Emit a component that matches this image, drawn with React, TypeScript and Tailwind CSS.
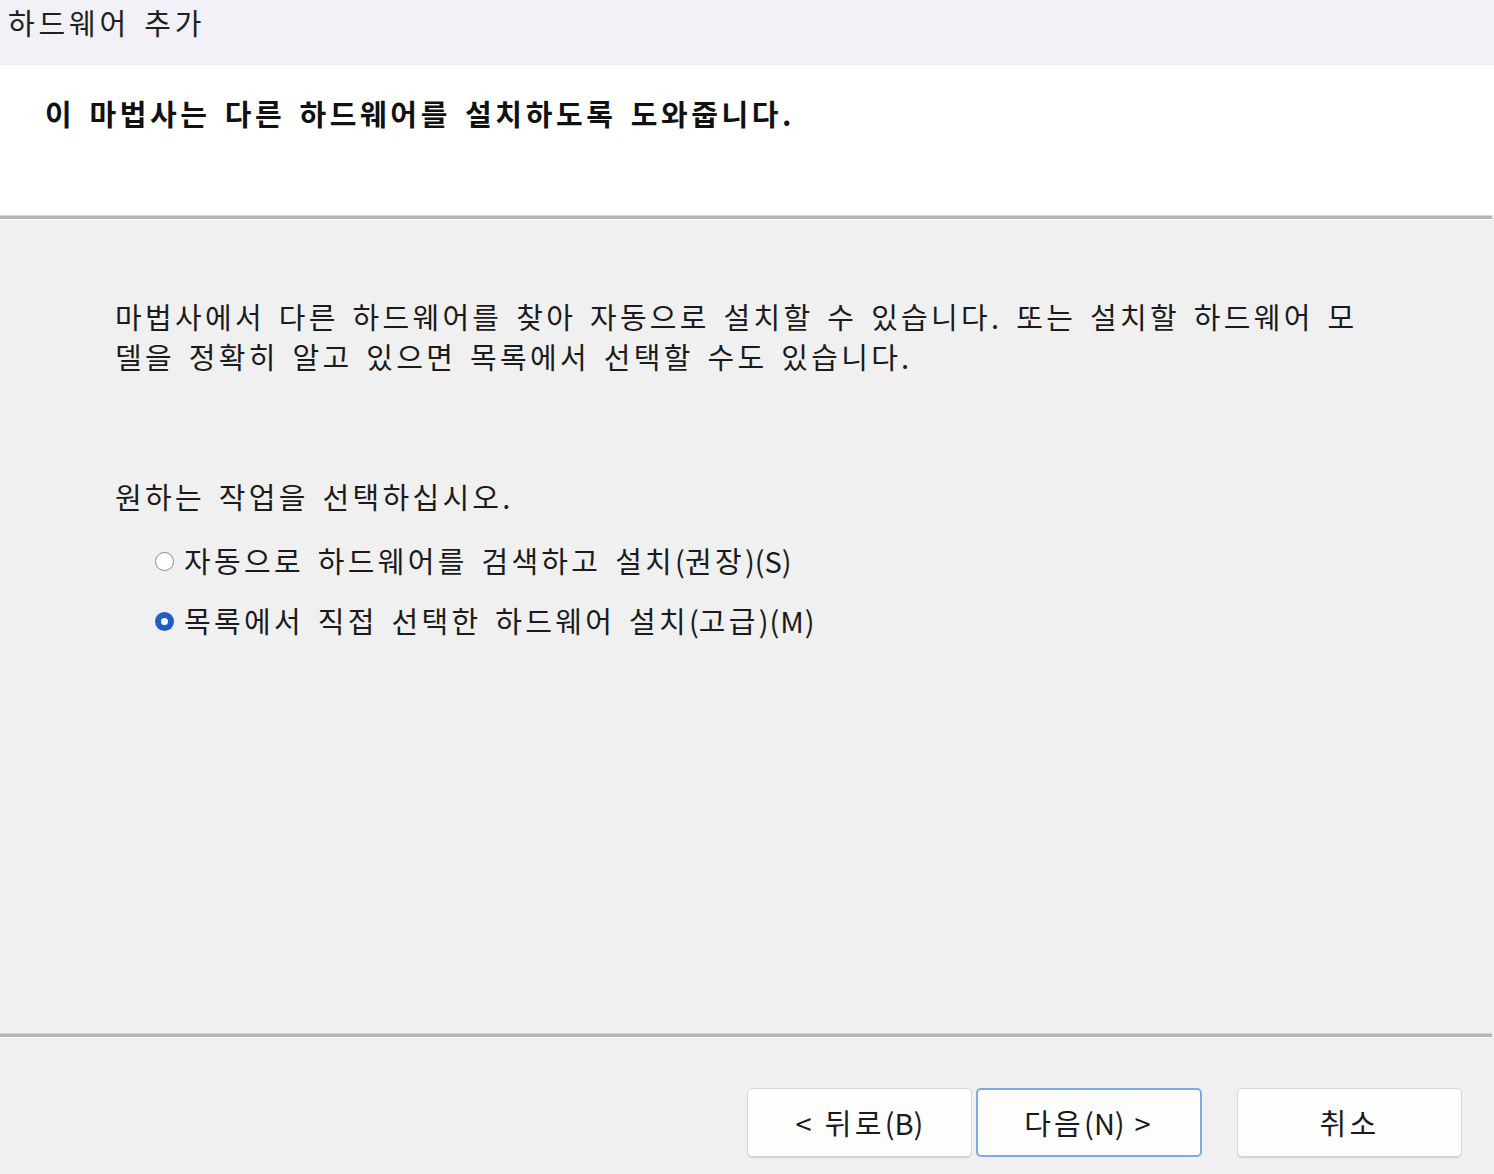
import { ReactNode } from 'react';

const font = "font-['Noto_Sans_CJK_KR','Noto_Sans',sans-serif]";

function Separator() {
    return (
        <div className="mr-[2px] flex flex-col">
            <div className="h-[1px] bg-[#d6d6d6]" />
            <div className="h-[3px] bg-[#b5b5b5]" />
            <div className="h-[1px] bg-[#ffffff]" />
        </div>
    );
}

function Radio({ checked, children }: { checked?: boolean; children: ReactNode }) {
    return (
        <div className="flex h-[40px] items-center pl-[155px]">
            {checked ? (
                <span className="flex h-[19px] w-[19px] items-center justify-center rounded-full bg-[#1f5fc4]">
                    <span className="h-[7px] w-[7px] rounded-full bg-white" />
                </span>
            ) : (
                <span className="h-[19px] w-[19px] rounded-full border-[1.5px] border-[#8a8a8a] bg-white" />
            )}
            <span className="ml-[10px] whitespace-nowrap">{children}</span>
        </div>
    );
}

function Button({ primary, children }: { primary?: boolean; children: ReactNode }) {
    return (
        <button
            className={
                primary
                    ? 'flex h-[69px] w-[226px] items-center justify-center rounded-[5px] border-2 border-[#7fa9df] bg-[#fdfdfd] text-[#1b1b1b]'
                    : 'flex h-[69px] w-[225px] items-center justify-center rounded-[5px] border border-[#d9d9d9] bg-[#fdfdfd] text-[#1b1b1b] shadow-[0_1px_0_#cfcfcf]'
            }
        >
            <span className="whitespace-nowrap">{children}</span>
        </button>
    );
}

export default function App() {
    return (
        <div
            className={`${font} flex h-[1174px] w-[1494px] flex-col overflow-hidden bg-[#f0f0f0] text-[29px] tracking-[3.3px] text-[#1b1b1b] [word-spacing:4px]`}
        >
            {/* title bar */}
            <div className="h-[65px] shrink-0 bg-[#f2f1f7] pl-[8px]">
                <div className="leading-[44px] tracking-[3.8px] text-[#202020]">하드웨어 추가</div>
            </div>

            {/* header */}
            <div className="h-[150px] shrink-0 bg-white pl-[45px] pt-[28px]">
                <div className="font-bold leading-[40px] tracking-[3.6px] text-[#111]">이 마법사는 다른 하드웨어를 설치하도록 도와줍니다.</div>
            </div>
            <Separator />

            {/* body */}
            <div className="flex flex-1 flex-col pt-[76px]">
                <div className="pl-[115px] leading-[40px]">
                    <div className="whitespace-nowrap">마법사에서 다른 하드웨어를 찾아 자동으로 설치할 수 있습니다. 또는 설치할 하드웨어 모</div>
                    <div className="whitespace-nowrap">델을 정확히 알고 있으면 목록에서 선택할 수도 있습니다.</div>
                </div>
                <div className="mt-[100px] pl-[115px] leading-[40px]">원하는 작업을 선택하십시오.</div>
                <div className="mt-[25px] flex flex-col gap-[20px]">
                    <Radio>자동으로 하드웨어를 검색하고 설치<span className="tracking-normal">(</span>권장<span className="tracking-normal">)(S)</span></Radio>
                    <Radio checked>목록에서 직접 선택한 하드웨어 설치<span className="tracking-normal">(</span>고급<span className="tracking-[1px]">)(M)</span></Radio>
                </div>
            </div>

            <Separator />
            {/* footer */}
            <div className="flex h-[136px] shrink-0 items-start justify-end pr-[32px] pt-[50px]">
                <div className="flex gap-[4px]">
                    <Button>&lt; 뒤로<span className="tracking-normal">(B)</span></Button>
                    <Button primary>다음<span className="tracking-normal">(N)</span> &gt;</Button>
                </div>
                <div className="ml-[35px]">
                    <Button>취소</Button>
                </div>
            </div>
        </div>
    );
}
